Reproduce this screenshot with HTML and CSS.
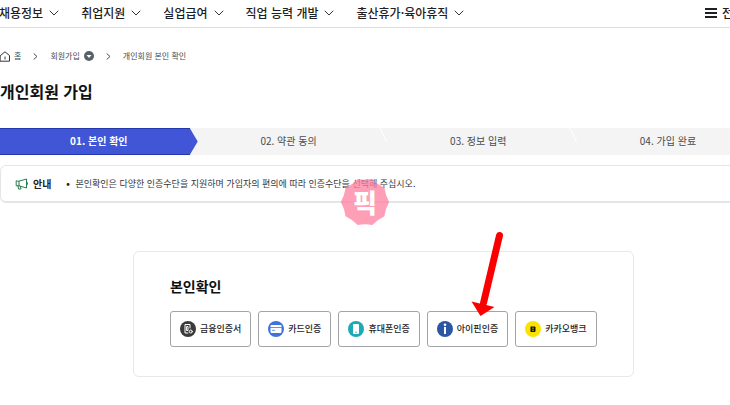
FILE: index.html
```html
<!DOCTYPE html>
<html lang="ko">
<head>
<meta charset="utf-8">
<title>개인회원 가입</title>
<link rel="stylesheet" href="styles.css">
</head>
<body>
<header class="header">
<nav class="gnb">
<a href="#">채용정보<svg class="chev" viewBox="0 0 10 6"><path d="M1 1l4 4 4-4"/></svg></a>
<a href="#">취업지원<svg class="chev" viewBox="0 0 10 6"><path d="M1 1l4 4 4-4"/></svg></a>
<a href="#">실업급여<svg class="chev" viewBox="0 0 10 6"><path d="M1 1l4 4 4-4"/></svg></a>
<a href="#">직업 능력 개발<svg class="chev" viewBox="0 0 10 6"><path d="M1 1l4 4 4-4"/></svg></a>
<a href="#">출산휴가·육아휴직<svg class="chev" viewBox="0 0 10 6"><path d="M1 1l4 4 4-4"/></svg></a>
</nav>
<button type="button" class="all_menu"><svg class="bars" viewBox="0 0 12 10"><path d="M0 1h12M0 5h12M0 9h12"/></svg>전체메뉴</button>
</header>

<main class="main">
<nav class="location">
<a href="#" class="home"><svg class="ico_home" viewBox="0 0 10 11"><path d="M.5 4.5L5 .8l4.500 3.700v5.700h-9z"/><path d="M5 6v2"/></svg>홈</a>
<svg class="arr" viewBox="0 0 5 7"><path d="M1 .8l3 2.700-3 2.700"/></svg>
<a href="#" class="loc_menu">회원가입<svg class="ico_down" viewBox="0 0 10 10"><circle cx="5" cy="5" r="5"/><path d="M2.500 4h5L5 7z"/></svg></a>
<svg class="arr" viewBox="0 0 5 7"><path d="M1 .8l3 2.700-3 2.700"/></svg>
<span>개인회원 본인 확인</span>
</nav>

<h1 class="title">개인회원 가입</h1>

<ol class="steps">
<li class="on">01. 본인 확인</li>
<li>02. 약관 동의</li>
<li>03. 정보 입력</li>
<li>04. 가입 완료</li>
</ol>

<section class="notice">
<strong class="notice_tit"><svg class="ico_mega" viewBox="0 0 13 12"><path d="M4 3.200L11.500 1v9L4 7.800H1.200V3.200zM4 3.200v4.600M3 8l.6 3h2.400l-.6-2.700M11.500 4.500h.9v2h-.9"/></svg>안내</strong>
<ul>
<li>본인확인은 다양한 인증수단을 지원하며 가입자의 편의에 따라 인증수단을 선택해 주십시오.</li>
</ul>
<span class="stamp"><svg viewBox="0 0 48 48"><path d="M47 24Q43.500 30.300 42.600 37.500 36 40.600 31.100 45.900 24 44.500 16.900 45.900 12 40.600 5.400 37.500 4.500 30.300 1 24 4.500 17.700 5.400 10.500 12 7.400 16.900 2.100 24 3.500 31.100 2.100 36 7.400 42.600 10.500 43.500 17.700 47 24z"/></svg><b>픽</b></span>
</section>

<section class="card">
<h2>본인확인</h2>
<div class="auth">
<button type="button"><svg viewBox="0 0 16 16"><circle cx="8" cy="8" r="8" fill="#3a3a3c"/><path d="M10 7V3.500H5v8.500h3M7 5.500h1v4H7z" fill="none" stroke="#fff"/><circle cx="10.800" cy="10.500" r="1.500" fill="#3a3a3c" stroke="#fff"/></svg>금융인증서</button>
<button type="button"><svg viewBox="0 0 16 16"><circle cx="8" cy="8" r="8" fill="#3f74dc"/><rect x="2.500" y="4" width="11" height="8" rx="1" fill="#fff"/><path d="M2.500 6.500h11M4.500 9.300h2" fill="none" stroke="#3f74dc" stroke-width=".8"/></svg>카드인증</button>
<button type="button"><svg viewBox="0 0 16 16"><circle cx="8" cy="8" r="8" fill="#1eaab4"/><rect x="5" y="3" width="6" height="10" rx="1" fill="#fff"/><circle cx="8" cy="11.300" r=".7" fill="#1eaab4"/></svg>휴대폰인증</button>
<button type="button"><svg viewBox="0 0 16 16"><circle cx="8" cy="8" r="8" fill="#2b55a5"/><circle cx="8" cy="3.800" r="1.300" fill="#fff"/><rect x="7" y="6" width="2" height="7" fill="#fff"/></svg>아이핀인증</button>
<button type="button"><svg viewBox="0 0 16 16"><circle cx="8" cy="8" r="8" fill="#fbe300"/><path d="M5.500 5.500h4q1 0 1 1v3.500q0 1-1 1h-4z" fill="#111"/><path d="M7.500 7.200h1M7.500 9.300h1" stroke="#fbe300" stroke-width=".8"/></svg>카카오뱅크</button>
</div>
<svg class="pointer" viewBox="0 0 34 86"><path d="M29.500 4.500L13.500 72"/><path class="head" d="M1.500 70.500l9 14.500 14-9z"/></svg>
</section>
</main>
</body>
</html>
```
FILE: styles.css
```css
* {box-sizing: border-box}
body {margin: 0; overflow-x: hidden; background: #fff; color: #1e2124; font-family: "Noto Sans CJK KR", "Noto Sans", sans-serif; font-size: 9px; line-height: 16px}
a {color: inherit; text-decoration: none}
ul, ol {margin: 0; padding: 0; list-style: none}
button {border: 0; padding: 0; background: none; color: inherit; font: inherit; white-space: nowrap}
svg {flex: none; fill: none; stroke-linecap: round; stroke-linejoin: round}

/* header */
.header {display: flex; align-items: center; height: 28px; padding-bottom: 1px; overflow: hidden; border-bottom: 1px solid #dcdddf; font-size: 12px; font-weight: 500}
.gnb {display: flex; flex: none; gap: 22px; margin-left: -1px}
.gnb a {display: flex; align-items: center; gap: 6px; white-space: nowrap}
.chev {width: 10px; height: 6px; stroke: #33363d}
.all_menu {display: flex; flex: none; align-items: center; gap: 5px; width: 25px; margin-left: auto}
.bars {width: 12px; height: 10px; stroke: #1e2124; stroke-width: 2; stroke-linecap: butt}

/* contents */
.main {width: 105%}
.location {display: flex; align-items: center; gap: 12px; padding-top: 20px; font-size: 8px; color: #464c53}
.location a {display: flex; align-items: center; gap: 4px}
.ico_home {width: 10px; height: 11px; stroke: #33363d}
.arr {width: 5px; height: 7px; stroke: #464c53}
.ico_down {width: 10px; height: 10px}
.ico_down circle {fill: #58616a}
.ico_down path {fill: #fff}
.title {margin: 15px 0 0; color: #111; font-size: 16px; line-height: 24px; font-weight: 700}

.steps {display: grid; grid-template-columns: repeat(4, 1fr); width: 99%; margin-top: 25px; background: #f4f4f4; font-size: 10px; color: #464c53; text-align: center}
.steps li {position: relative; padding: 5px 0 6px 8px}
.steps li + li + li::before {content: ""; position: absolute; left: 0; top: 0; width: 8px; height: 14px; background: #fff; clip-path: polygon(0 0, 1px 0, 100% 100%, 7px 100%)}
.steps .on {background: #4056d6; box-shadow: inset 0 1px #2438ad, inset 0 -1px #2438ad; color: #fff; font-weight: 700}
.steps .on::after {content: ""; position: absolute; z-index: 1; left: 100%; top: 0; width: 8px; height: 100%; background: #4056d6; clip-path: polygon(0 0, 100% 50%, 0 100%)}

.notice {position: relative; display: flex; align-items: center; gap: 14px; height: 38px; margin-top: 10px; padding-left: 14px; border: 1px solid #e4e5e7; border-bottom-width: 2px; border-radius: 6px}
.notice_tit {display: flex; align-items: center; gap: 5px; font-size: 10px; font-weight: 700}
.ico_mega {width: 13px; height: 12px; stroke: #2a7d4a}
.notice li {display: flex; gap: 5px; color: #33363d; font-family: Inter, "Noto Sans CJK KR", sans-serif}
.notice li::before {content: "•"; color: #1e2124}

/* stamp over the notice */
.stamp {position: absolute; left: 340px; top: 12px; display: grid; width: 48px; height: 48px; place-items: center; color: #fff; font-size: 26px; line-height: 32px}
.stamp svg {grid-area: 1 / 1; width: 48px; height: 48px; fill: #ff7f9f; stroke: #ff7f9f; stroke-width: 2; opacity: .75}
.stamp b {grid-area: 1 / 1; z-index: 1; font-weight: 900}

.card {position: relative; width: fit-content; margin: 48px auto 28px; padding: 22px 36px 29px; border: 1px solid #e6e8ea; border-radius: 6px}
.card h2 {margin: 0 0 13px; color: #111; font-size: 14px; line-height: 24px; font-weight: 700}
.auth {display: flex; gap: 7px}
.auth button {display: flex; align-items: center; gap: 4px; height: 36px; padding: 0 9px; border: 1px solid #a3a5a8; border-radius: 3px; font-weight: 500}
.auth svg {width: 16px; height: 16px}

/* arrow to the i-PIN button */
.pointer {position: absolute; left: 336px; top: -21px; width: 34px; height: 86px; stroke: #fb0000; stroke-width: 7}
.pointer .head {fill: #fb0000; stroke: none}
```
